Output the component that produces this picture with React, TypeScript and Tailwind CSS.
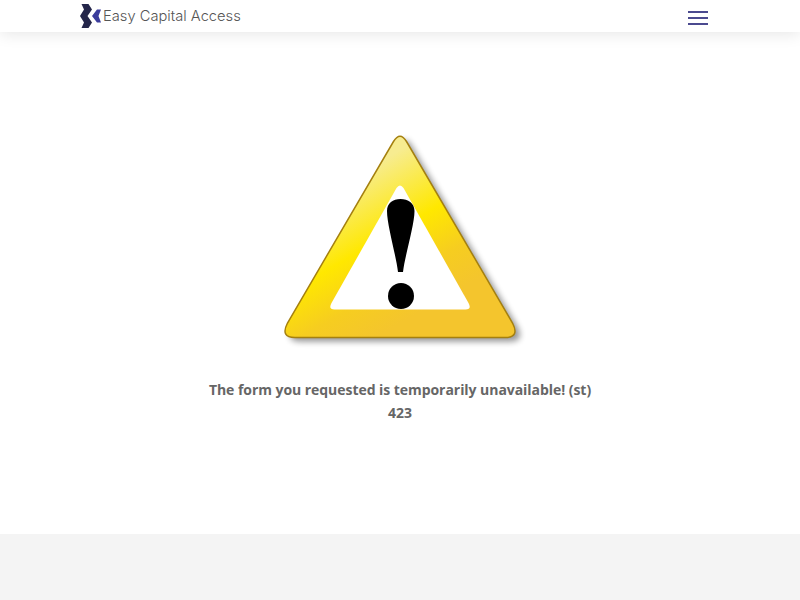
export default function App() {
  const outline = "M393.500 141.500Q400 131 406.500 141.500L512.500 323Q520 337.500 505 337.500H295Q280 337.500 287.500 323Z";
  return (
    <div className="min-h-[600px] bg-white flex flex-col font-['Open_Sans',sans-serif]">
      <header className="h-8 bg-white shadow-[0_2px_16px_rgba(0,0,0,0.1)] flex items-center justify-between pl-20 pr-[92px] relative">
        <div className="flex items-center gap-[2px]">
          <svg width="21" height="24" viewBox="0 0 21 24">
            <path d="M1.500 0H8.500L12 5.500 7.500 12 12 18.500 8.500 24H1.500L4 18.500 0 12 4 5.500Z" fill="#24264a" />
            <path d="M21 5.500L18.500 12 21 18.500H17L12 12 17 5.500Z" fill="#3b3d9c" />
          </svg>
          <span className="font-['Inter',sans-serif] font-light text-[14.700px] leading-6 text-[#555555]">Easy Capital Access</span>
        </div>
        <div className="flex flex-col gap-1 mt-1">
          <div className="w-5 h-0.5 bg-[#4b4a8f]" />
          <div className="w-5 h-0.5 bg-[#4b4a8f]" />
          <div className="w-5 h-0.5 bg-[#4b4a8f]" />
        </div>
      </header>
      <main className="h-[502px] flex flex-col items-center">
        <svg width="260" height="225" viewBox="270 130 260 225" className="mt-[98px]">
          <defs>
            <linearGradient id="yellow" gradientUnits="userSpaceOnUse" x1="400" y1="150" x2="475" y2="280">
              <stop offset="0" stopColor="#f7ec90" />
              <stop offset="0.45" stopColor="#ffe800" />
              <stop offset="0.75" stopColor="#f6cd20" />
              <stop offset="1" stopColor="#f4c52d" />
            </linearGradient>
            <filter id="blur" x="-10%" y="-10%" width="120%" height="120%">
              <feGaussianBlur stdDeviation="3" />
            </filter>
          </defs>
          <path d={outline} fill="#000" opacity="0.42" filter="url(#blur)" transform="translate(5 4)" />
          <path d={outline} fill="url(#yellow)" stroke="#a5800f" strokeWidth="1.500" />
          <path d="M396.500 188Q400 183 403.500 188L468.500 303Q472 309.500 465.500 309.500H334.500Q328 309.500 331.500 303Z" fill="#ffffff" />
          <path d="M400.500 199C408 199 414.500 203 414.500 211C414.500 225 405 255 403 272H398C396 255 387 225 387 211C387 203 393 199 400.500 199Z" fill="#000" />
          <circle cx="401" cy="296" r="13" fill="#000" />
        </svg>
        <div className="mt-[23px] text-center text-[14px] leading-[23px] tracking-[-0.05px] font-bold text-[#666666]">
          <p>The form you requested is temporarily unavailable! (st)</p>
          <p>423</p>
        </div>
      </main>
      <footer className="h-[66px] bg-[#f4f4f4]" />
    </div>
  );
}
